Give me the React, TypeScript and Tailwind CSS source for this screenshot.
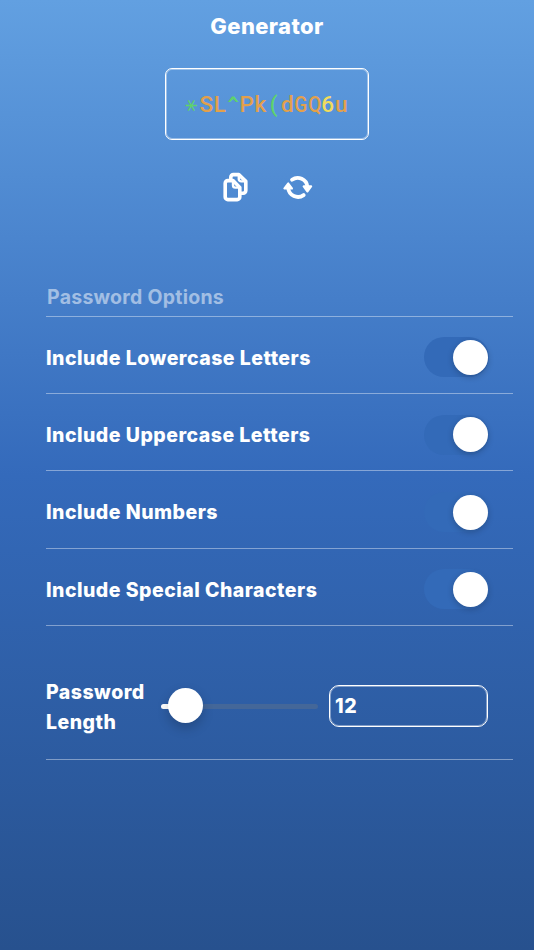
import { useState } from "react";
import clsx from "clsx";

const PASSWORD = "*SL^Pk(dGQ6u";

const OPTIONS = [
  "Include Lowercase Letters",
  "Include Uppercase Letters",
  "Include Numbers",
  "Include Special Characters",
];

function charClass(char: string) {
  if (/[0-9]/.test(char)) return "text-[#f2dc5c]";
  if (/[GQ]/.test(char)) return "text-[#e3a04b] scale-x-85";
  if (/[a-zA-Z]/.test(char)) return "text-[#e3a04b]";
  if (char === "*") return "text-[#5fd36c] font-['DejaVu_Sans_Mono',monospace] -translate-x-[5px] translate-y-px rotate-90 text-[25px]";
  if (char === "^") return "text-[#5fd36c] font-['DejaVu_Sans_Mono',monospace] font-bold text-[19px]";
  return "text-[#5fd36c]";
}

function CopyIcon() {
  return (
    <svg width="26" height="30" viewBox="0 0 26 30" fill="none" stroke="white" strokeWidth="3.6" strokeLinejoin="round" strokeLinecap="round">
      <path d="M8.8 6.8V5.200a2.600 2.600 0 0 1 2.600-2.600h5.400L23.800 9.400v9.200a2.600 2.600 0 0 1-2.600 2.600h-2" />
      <path d="M16.800 3v4a2.400 2.400 0 0 0 2.400 2.400h4" strokeWidth="2.400" />
      <path d="M5.800 8.600h5.200l6.800 6.800v9.600a2.600 2.600 0 0 1-2.600 2.600H5.800A2.600 2.600 0 0 1 3.200 25V11.200a2.600 2.600 0 0 1 2.600-2.600z" />
      <path d="M11 9v4.200a2.400 2.400 0 0 0 2.400 2.400h4" strokeWidth="2.400" />
    </svg>
  );
}

function RefreshIcon() {
  return (
    <svg width="30" height="26" viewBox="0 0 30 26" fill="none" stroke="white" strokeWidth="3.8" strokeLinecap="round">
      <path d="M9 5.700A9.800 9.800 0 0 1 24.400 12.700" />
      <path d="M20.600 21.100A9.800 9.800 0 0 1 5.200 14.100" />
      <path d="M20.800 12.400h7.200l-3.600 4.800z" fill="white" strokeWidth="2.400" strokeLinejoin="round" />
      <path d="M1.600 14.400h7.200l-3.600-4.800z" fill="white" strokeWidth="2.400" strokeLinejoin="round" />
    </svg>
  );
}

function Toggle({ label }: { label: string }) {
  const [on, setOn] = useState(true);

  return (
    <button
      role="switch"
      aria-checked={on}
      aria-label={label}
      onClick={() => setOn(!on)}
      className={clsx("flex h-10 w-[65px] items-center rounded-full bg-[#336ab8] px-[1.5px]", on ? "justify-end" : "justify-start")}
    >
      <span className="size-[35px] rounded-full bg-white shadow-[0_2px_6px_rgba(0,0,0,0.22)]" />
    </button>
  );
}

export default function App() {
  const [length, setLength] = useState("12");

  return (
    <main className="flex h-[950px] flex-col overflow-hidden bg-[linear-gradient(180deg,#62a0e1_0%,#346abb_50%,#27518e_100%)] font-['Inter',sans-serif] text-white">
      <h1 className="pt-[10px] text-center text-[22px] leading-8 font-extrabold tracking-[0.4px]">Generator</h1>

      <div className="mt-[26px] flex h-[72px] w-[204px] items-center justify-center self-center rounded-[7px] border border-white shadow-[inset_0_0_0_1px_rgba(255,255,255,0.4)]">
        <p className="flex items-center font-['Roboto',sans-serif] text-[22.500px] leading-none font-medium">
          {PASSWORD.split("").map((char, i) => (
            <span key={i} className={clsx("flex w-[13.500px] justify-center", charClass(char))}>
              {char}
            </span>
          ))}
        </p>
      </div>

      <div className="mt-8 flex h-[30px] items-center justify-center gap-[35px]">
        <button aria-label="Copy">
          <CopyIcon />
        </button>
        <button aria-label="Generate">
          <RefreshIcon />
        </button>
      </div>

      <section className="mt-[81px] ml-[46px] w-[467px]">
        <h2 className="flex h-[33.600px] items-center border-b border-white/40 pb-[3px] pl-px text-[19.500px] font-bold tracking-[0.25px] text-white/50">
          Password Options
        </h2>

        {OPTIONS.map((option) => (
          <div key={option} className="flex h-[77.400px] items-center justify-between border-b border-white/40 pt-[5px] pr-6">
            <span className="pt-[2px] text-[19.500px] font-extrabold tracking-[0.48px]">{option}</span>
            <Toggle label={option} />
          </div>
        ))}

        <div className="flex h-[134px] items-center border-b border-white/40 pt-[27px] pr-[25px]">
          <span className="w-[115px] pt-px text-[19.500px] leading-[30px] font-extrabold tracking-[0.48px]">
            Password
            <br />
            Length
          </span>
          <div className="flex h-[35px] w-[157px] items-center rounded-full">
            <span className="h-[5px] w-[8px] rounded-l-full bg-white" />
            <span className="z-10 -ml-px size-[35px] shrink-0 -translate-y-px rounded-full bg-white shadow-[0_5px_12px_rgba(0,0,0,0.2)]" />
            <span className="h-[5px] flex-1 rounded-r-full bg-[#446799]" />
          </div>
          <input
            value={length}
            onChange={(e) => setLength(e.target.value)}
            aria-label="Password length"
            className="ml-auto h-[42px] w-[159px] rounded-[10px] border border-white bg-transparent px-[5px] text-[19.500px] font-extrabold tracking-[0.6px] shadow-[inset_0_0_0_1px_rgba(255,255,255,0.4)] outline-none"
          />
        </div>
      </section>
    </main>
  );
}
